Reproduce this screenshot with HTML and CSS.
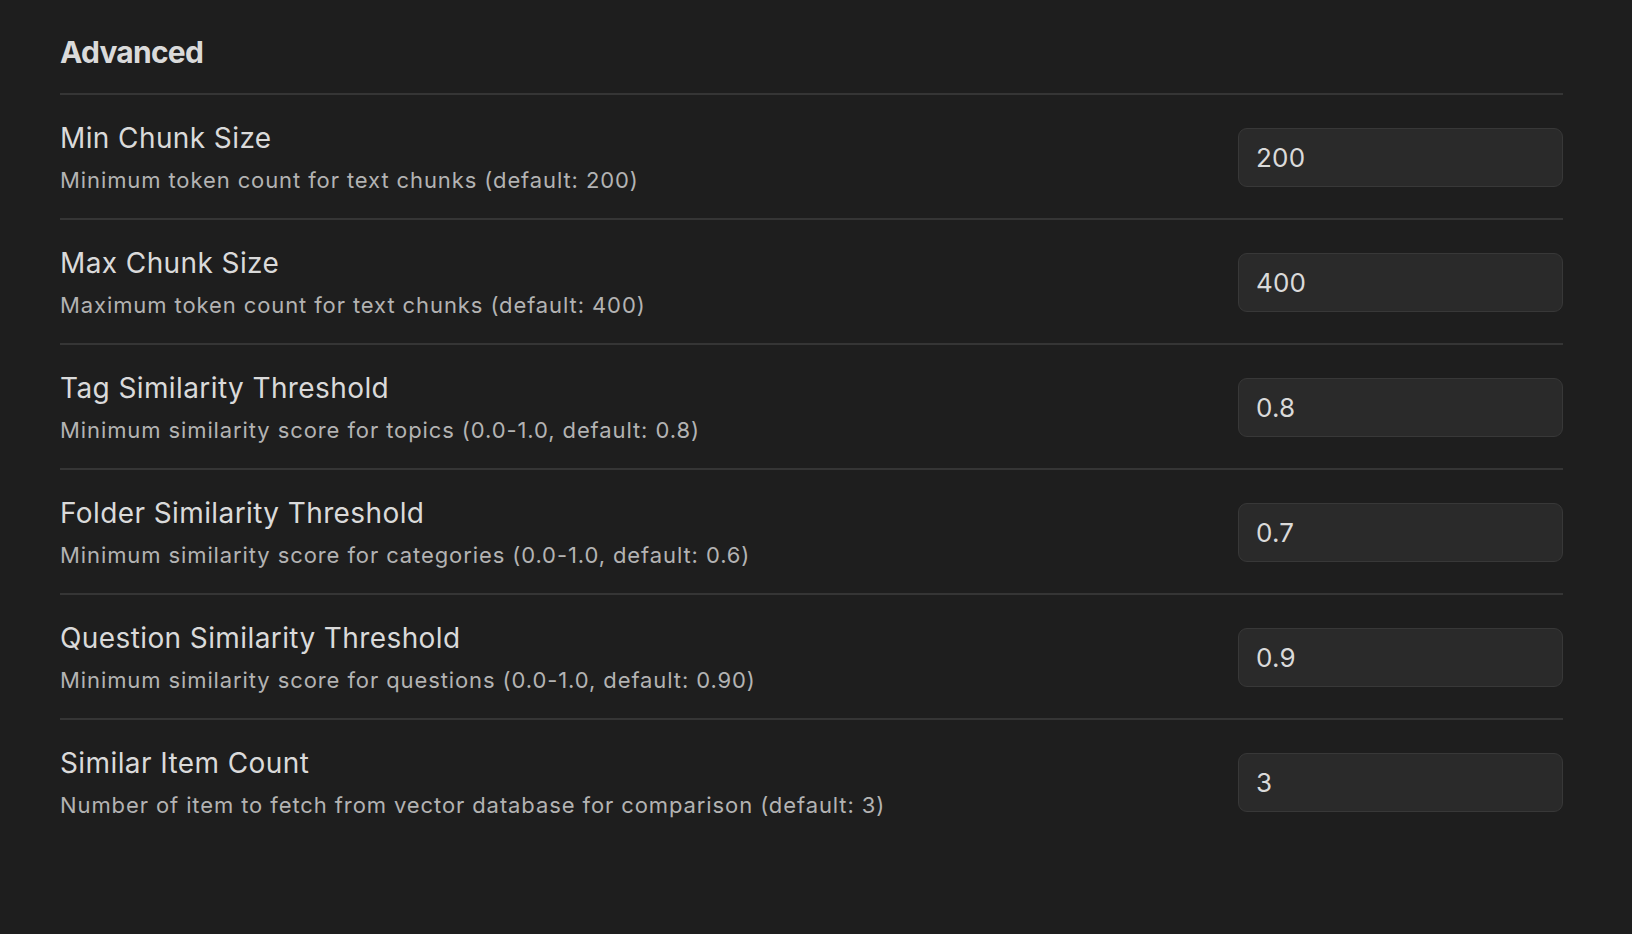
FILE: index.html
```html
<!DOCTYPE html>
<html>
<head>
<meta charset="utf-8">
<link rel="stylesheet" href="styles.css">
</head>
<body>
<div class="settings">
  <h2 class="heading">Advanced</h2>
  <div class="item">
    <div class="info">
      <div class="name">Min Chunk Size</div>
      <div class="desc">Minimum token count for text chunks (default: 200)</div>
    </div>
    <input class="field" type="text" value="200">
  </div>
  <div class="item">
    <div class="info">
      <div class="name">Max Chunk Size</div>
      <div class="desc">Maximum token count for text chunks (default: 400)</div>
    </div>
    <input class="field" type="text" value="400">
  </div>
  <div class="item">
    <div class="info">
      <div class="name">Tag Similarity Threshold</div>
      <div class="desc">Minimum similarity score for topics (0.0-1.0, default: 0.8)</div>
    </div>
    <input class="field" type="text" value="0.8">
  </div>
  <div class="item">
    <div class="info">
      <div class="name">Folder Similarity Threshold</div>
      <div class="desc">Minimum similarity score for categories (0.0-1.0, default: 0.6)</div>
    </div>
    <input class="field" type="text" value="0.7">
  </div>
  <div class="item">
    <div class="info">
      <div class="name">Question Similarity Threshold</div>
      <div class="desc">Minimum similarity score for questions (0.0-1.0, default: 0.90)</div>
    </div>
    <input class="field" type="text" value="0.9">
  </div>
  <div class="item last">
    <div class="info">
      <div class="name">Similar Item Count</div>
      <div class="desc">Number of item to fetch from vector database for comparison (default: 3)</div>
    </div>
    <input class="field" type="text" value="3">
  </div>
</div>
</body>
</html>
```
FILE: styles.css
```css
html, body {
  margin: 0;
  padding: 0;
  background: #1e1e1e;
  height: 100%;
}
body {
  font-family: Inter, "Noto Sans", sans-serif;
  color: #dadada;
}
.settings {
  padding: 0 69px 0 60px;
}
.heading {
  margin: 0;
  padding: 34px 0 23px;
  font-size: 30px;
  line-height: 36px;
  font-weight: 700;
  letter-spacing: -0.75px;
  color: #dadada;
  border-bottom: 2px solid #353535;
}
.item {
  display: flex;
  align-items: center;
  justify-content: space-between;
  padding: 26px 0 24px;
  border-bottom: 2px solid #353535;
}
.item.last {
  border-bottom: none;
}
.info {
  display: flex;
  flex-direction: column;
  gap: 11px;
}
.name {
  font-size: 28px;
  line-height: 34px;
  letter-spacing: 0.4px;
  color: #dadada;
}
.desc {
  font-size: 22px;
  line-height: 28px;
  letter-spacing: 0.9px;
  color: #b3b3b3;
}
.field {
  box-sizing: border-box;
  width: 325px;
  height: 59px;
  padding: 0 17px;
  background: #2a2a2a;
  border: 1.5px solid #383838;
  border-radius: 9px;
  color: #dadada;
  font-family: Inter, "Noto Sans", sans-serif;
  font-size: 26px;
  letter-spacing: 0.2px;
  outline: none;
}
```
